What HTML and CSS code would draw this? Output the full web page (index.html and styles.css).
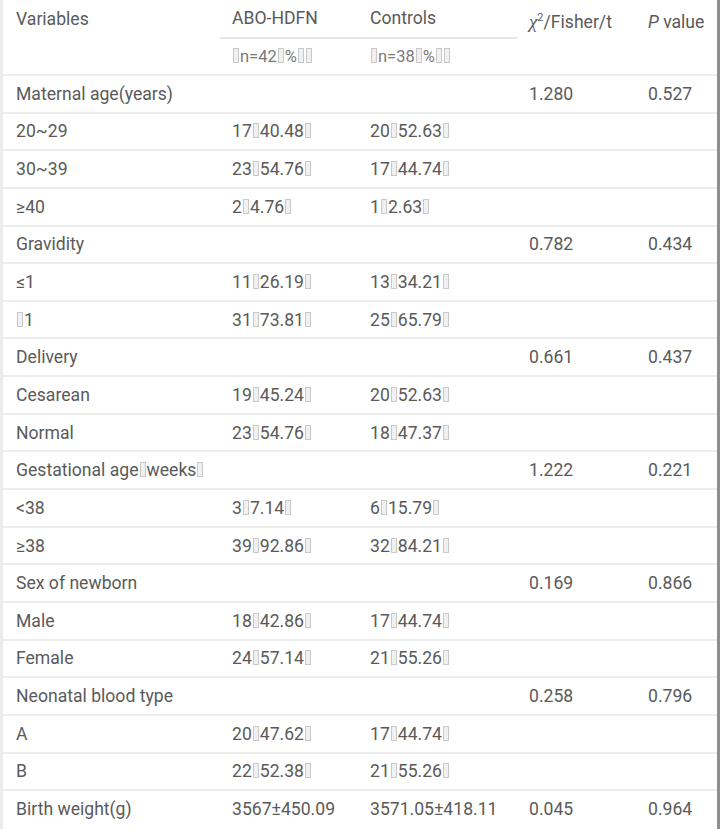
FILE: index.html
```html
<!DOCTYPE html>
<html>
<head>
<meta charset="utf-8">
<link rel="stylesheet" href="styles.css">
</head>
<body>
<div class="frame">
<table class="tbl">
  <colgroup>
    <col class="c1"><col class="c2"><col class="c3"><col class="c4"><col class="c5">
  </colgroup>
  <thead>
    <tr class="h1">
      <th class="first">Variables</th>
      <th class="grp">ABO-HDFN</th>
      <th class="grp">Controls</th>
      <th class="stat"><i class="chi">χ</i><sup>2</sup>/Fisher/t</th>
      <th class="stat"><i>P</i> value</th>
    </tr>
    <tr class="h2">
      <th class="first"></th>
      <th><span class="tf"></span>n=42<span class="tf"></span>%<span class="tf"></span><span class="tf"></span></th>
      <th><span class="tf"></span>n=38<span class="tf"></span>%<span class="tf"></span><span class="tf"></span></th>
      <th></th>
      <th></th>
    </tr>
  </thead>
  <tbody>
    <tr><td class="first">Maternal age(years)</td><td></td><td></td><td>1.280</td><td>0.527</td></tr>
    <tr><td class="first">20~29</td><td>17<span class="tf"></span>40.48<span class="tf"></span></td><td>20<span class="tf"></span>52.63<span class="tf"></span></td><td></td><td></td></tr>
    <tr><td class="first">30~39</td><td>23<span class="tf"></span>54.76<span class="tf"></span></td><td>17<span class="tf"></span>44.74<span class="tf"></span></td><td></td><td></td></tr>
    <tr><td class="first">≥40</td><td>2<span class="tf"></span>4.76<span class="tf"></span></td><td>1<span class="tf"></span>2.63<span class="tf"></span></td><td></td><td></td></tr>
    <tr><td class="first">Gravidity</td><td></td><td></td><td>0.782</td><td>0.434</td></tr>
    <tr><td class="first">≤1</td><td>11<span class="tf"></span>26.19<span class="tf"></span></td><td>13<span class="tf"></span>34.21<span class="tf"></span></td><td></td><td></td></tr>
    <tr><td class="first"><span class="tf"></span>1</td><td>31<span class="tf"></span>73.81<span class="tf"></span></td><td>25<span class="tf"></span>65.79<span class="tf"></span></td><td></td><td></td></tr>
    <tr><td class="first">Delivery</td><td></td><td></td><td>0.661</td><td>0.437</td></tr>
    <tr><td class="first">Cesarean</td><td>19<span class="tf"></span>45.24<span class="tf"></span></td><td>20<span class="tf"></span>52.63<span class="tf"></span></td><td></td><td></td></tr>
    <tr><td class="first">Normal</td><td>23<span class="tf"></span>54.76<span class="tf"></span></td><td>18<span class="tf"></span>47.37<span class="tf"></span></td><td></td><td></td></tr>
    <tr><td class="first">Gestational age<span class="tf"></span>weeks<span class="tf"></span></td><td></td><td></td><td>1.222</td><td>0.221</td></tr>
    <tr><td class="first">&lt;38</td><td>3<span class="tf"></span>7.14<span class="tf"></span></td><td>6<span class="tf"></span>15.79<span class="tf"></span></td><td></td><td></td></tr>
    <tr><td class="first">≥38</td><td>39<span class="tf"></span>92.86<span class="tf"></span></td><td>32<span class="tf"></span>84.21<span class="tf"></span></td><td></td><td></td></tr>
    <tr><td class="first">Sex of newborn</td><td></td><td></td><td>0.169</td><td>0.866</td></tr>
    <tr><td class="first">Male</td><td>18<span class="tf"></span>42.86<span class="tf"></span></td><td>17<span class="tf"></span>44.74<span class="tf"></span></td><td></td><td></td></tr>
    <tr><td class="first">Female</td><td>24<span class="tf"></span>57.14<span class="tf"></span></td><td>21<span class="tf"></span>55.26<span class="tf"></span></td><td></td><td></td></tr>
    <tr><td class="first">Neonatal blood type</td><td></td><td></td><td>0.258</td><td>0.796</td></tr>
    <tr><td class="first">A</td><td>20<span class="tf"></span>47.62<span class="tf"></span></td><td>17<span class="tf"></span>44.74<span class="tf"></span></td><td></td><td></td></tr>
    <tr><td class="first">B</td><td>22<span class="tf"></span>52.38<span class="tf"></span></td><td>21<span class="tf"></span>55.26<span class="tf"></span></td><td></td><td></td></tr>
    <tr class="last"><td class="first">Birth weight(g)</td><td>3567±450.09</td><td>3571.05±418.11</td><td>0.045</td><td>0.964</td></tr>
  </tbody>
</table>
</div>
</body>
</html>
```
FILE: styles.css
```css
html, body {
  margin: 0;
  padding: 0;
  background: #ffffff;
}
.frame {
  width: 720px;
  height: 829px;
  overflow: hidden;
  box-sizing: border-box;
  border-left: 3px solid #ececec;
  border-right: 3px solid #8e8e8e;
  background: #fff;
}
.tbl {
  width: 714px;
  border-collapse: collapse;
  table-layout: fixed;
  font-family: Roboto, "Liberation Sans", sans-serif;
  font-size: 17.6px;
  color: #5a5a5a;
}
.c1 { width: 217px; }
.c2 { width: 138px; }
.c3 { width: 159px; }
.c4 { width: 119px; }
.c5 { width: 81px; }
.tbl th, .tbl td {
  font-weight: normal;
  text-align: left;
  padding: 0 0 0 12px;
  white-space: nowrap;
  vertical-align: middle;
  line-height: 20px;
}
.tbl .first { padding-left: 13px; }
.tbl tbody tr { height: 37.65px; }
.tbl tbody tr td { border-bottom: 2px solid #ececec; }
.tbl tbody tr.last td { border-bottom: none; }
.h1 th { height: 36px; padding-bottom: 1px; }
.h1 th.grp { border-bottom: 2px solid #e6e6e6; }
.h1 th.stat { padding-top: 5px; padding-bottom: 0; height: 32px; }
.h2 th { border-bottom: 2px solid #ececec; height: 35px; color: #7a7a7a; font-size: 16.5px; }
.chi { font-family: "Liberation Serif", serif; font-size: 19px; }
sup { font-size: 11px; vertical-align: 7px; line-height: 0; }
.tf {
  display: inline-block;
  width: 4px;
  height: 13px;
  border: 1px solid #c9c9c9;
  background: #f0f0f0;
  margin: 0 1px;
  vertical-align: -1px;
}
```
